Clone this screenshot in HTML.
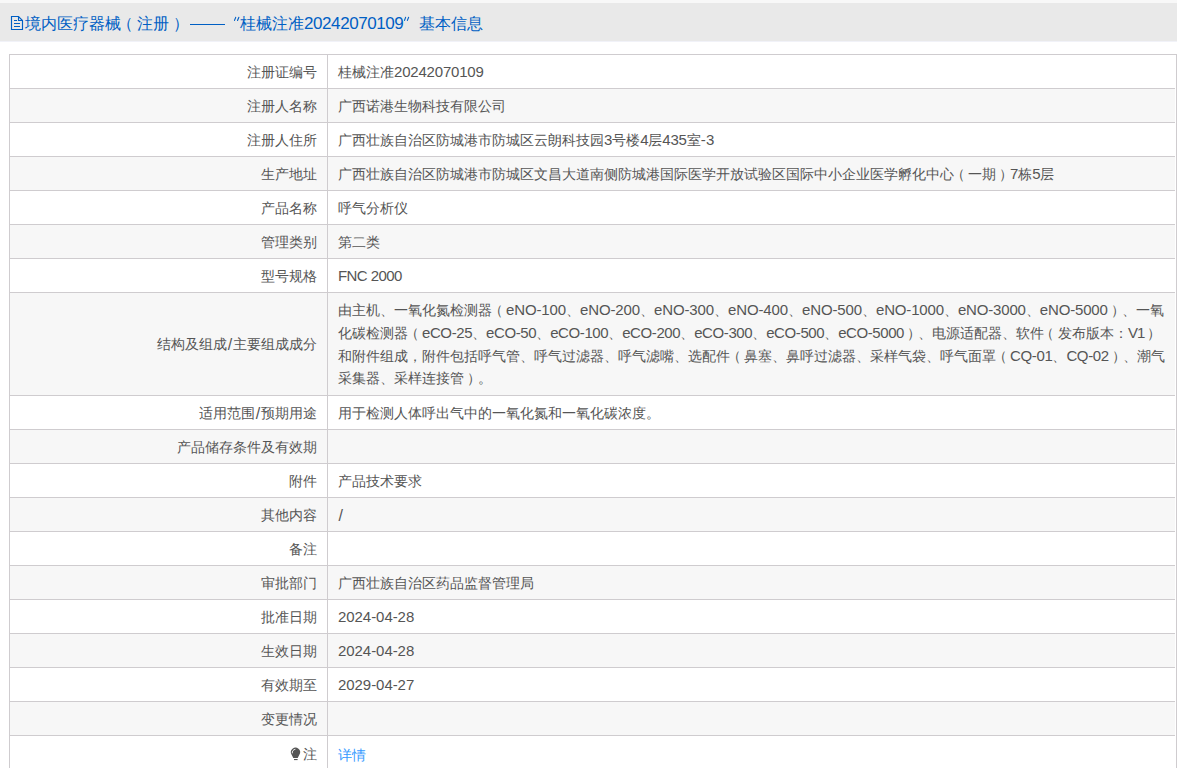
<!DOCTYPE html>
<html><head><meta charset="utf-8">
<style>
html,body{margin:0;padding:0;background:#fff;}
body{width:1177px;height:768px;overflow:hidden;position:relative;font-family:"Liberation Sans",sans-serif;color:#555;}
.top{position:absolute;left:0;top:0;width:1177px;height:3px;background:#f8f8f8;}
.hdr{position:absolute;left:0;top:3px;width:1177px;height:38px;background:#e9e9e9;}
.hline{position:absolute;left:0;top:41px;width:1177px;height:1px;background:#f1f2f8;}
.t{position:absolute;top:4.5px;height:38px;line-height:38px;font-size:16px;color:#005fc4;white-space:nowrap;}
.dash{position:absolute;left:190px;top:24px;width:35px;height:1px;background:#005fc4;}
table{position:absolute;left:9px;top:54px;border-collapse:collapse;width:1167px;font-size:14px;}
td:last-child{border-right-color:#fff;}
.rb{position:absolute;left:1176px;top:54px;width:1px;height:714px;background:#cfcccf;}
.wb{position:absolute;left:1175px;top:55px;width:1px;height:713px;background:#fff;}
.tb{position:absolute;left:1170px;top:54px;width:7px;height:1px;background:#cfcccf;}
.sl{font-size:16px;line-height:0;margin:0 0.9px;position:relative;top:1px;}
td{border:1px solid #cfcccf;padding:6px 10px 4px 10px;line-height:23px;vertical-align:middle;white-space:nowrap;}
td.l{width:297px;text-align:right;}
tr:nth-child(even) td{background:#f7f7f7;}
.n{font-size:15px;line-height:0;}
tr.tall td{line-height:22.75px;padding-top:6px;padding-bottom:5px;}
.lnk{color:#3399ff;position:relative;top:2px;}
.po{position:relative;left:-3.5px;}
.pc{position:relative;left:3px;}
.pm{position:relative;left:0.5px;}
.tpo{position:relative;left:-4px;}
.tpc{position:relative;left:4px;}
tr.last td.l span.z{position:relative;top:1px;}
</style></head><body>
<div class="top"></div>
<div class="hdr"></div>
<div class="hline"></div>
<svg style="position:absolute;left:0;top:0" width="40" height="40">
<path d="M11.5 16.5H18.5L22.5 20.5V29.5H11.5Z" fill="none" stroke="#005fc4" stroke-width="1.15"/>
<path d="M18.5 16.5V20.5H22.5" fill="none" stroke="#005fc4" stroke-width="1.1"/>
<path d="M14 20.5H17M14 23.5H20M14 26.5H20" stroke="#005fc4" stroke-width="1.1"/>
</svg>
<svg style="position:absolute;left:0;top:0" width="420" height="30"><path d="M235.7 17.4L234.5 20.4M238.8 17.4L237.5 20.4M405.6 17.4L404.5 20.4M408.6 17.4L407.4 20.4" stroke="#005fc4" stroke-width="1.15" stroke-linecap="round"/></svg>
<div class="t" style="left:25px">境内医疗器械<span class="tpo">（</span>注册<span class="tpc">）</span></div>
<div class="dash"></div>
<div class="t" style="left:239.5px">桂械注准</div>
<div class="t" style="left:304px;letter-spacing:-0.42px;font-size:17px">20242070109</div>
<div class="t" style="left:418.5px">基本信息</div>
<table>
<tr><td class="l">注册证编号</td><td>桂械注准<span class="n" style="letter-spacing:-0.192px">20242070109</span></td></tr>
<tr><td class="l">注册人名称</td><td>广西诺港生物科技有限公司</td></tr>
<tr><td class="l">注册人住所</td><td>广西壮族自治区防城港市防城区云朗科技园<span class="n" style="letter-spacing:-0.194px">3</span>号楼<span class="n" style="letter-spacing:-0.194px">4</span>层<span class="n" style="letter-spacing:-0.194px">435</span>室<span class="n" style="letter-spacing:0.153px">-3</span></td></tr>
<tr><td class="l">生产地址</td><td>广西壮族自治区防城港市防城区文昌大道南侧防城港国际医学开放试验区国际中小企业医学孵化中心<span class="po">（</span>一期<span class="pc">）</span><span class="n" style="letter-spacing:-0.194px">7</span>栋<span class="n" style="letter-spacing:-0.194px">5</span>层</td></tr>
<tr><td class="l">产品名称</td><td>呼气分析仪</td></tr>
<tr><td class="l">管理类别</td><td>第二类</td></tr>
<tr><td class="l">型号规格</td><td><span class="n" style="letter-spacing:-0.566px">FNC 2000</span></td></tr>
<tr class="tall"><td class="l">结构及组成<span class="sl">/</span>主要组成成分</td><td>由主机、一氧化氮检测器<span class="po">（</span><span class="n" style="letter-spacing:-0.125px">eNO-100</span>、<span class="n" style="letter-spacing:-0.125px">eNO-200</span>、<span class="n" style="letter-spacing:-0.125px">eNO-300</span>、<span class="n" style="letter-spacing:-0.125px">eNO-400</span>、<span class="n" style="letter-spacing:-0.125px">eNO-500</span>、<span class="n" style="letter-spacing:-0.165px">eNO-1000</span>、<span class="n" style="letter-spacing:-0.165px">eNO-3000</span>、<span class="n" style="letter-spacing:-0.165px">eNO-5000</span><span class="pc">）</span>、一氧<br>化碳检测器<span class="po">（</span><span class="n" style="letter-spacing:-0.405px">eCO-25</span>、<span class="n" style="letter-spacing:-0.405px">eCO-50</span>、<span class="n" style="letter-spacing:-0.411px">eCO-100</span>、<span class="n" style="letter-spacing:-0.411px">eCO-200</span>、<span class="n" style="letter-spacing:-0.411px">eCO-300</span>、<span class="n" style="letter-spacing:-0.411px">eCO-500</span>、<span class="n" style="letter-spacing:-0.427px">eCO-5000</span><span class="pc">）</span>、电源适配器、软件<span class="po">（</span>发布版本<span class="pm">：</span><span class="n" style="letter-spacing:-1.030px">V1</span><span class="pc">）</span><br>和附件组成，附件包括呼气管、呼气过滤器、呼气滤嘴、选配件<span class="po">（</span>鼻塞、鼻呼过滤器、采样气袋、呼气面罩<span class="po">（</span><span class="n" style="letter-spacing:-0.358px">CQ-01</span>、<span class="n" style="letter-spacing:-0.358px">CQ-02</span><span class="pc">）</span>、潮气<br>采集器、采样连接管<span class="pc">）</span>。</td></tr>
<tr><td class="l">适用范围<span class="sl">/</span>预期用途</td><td>用于检测人体呼出气中的一氧化氮和一氧化碳浓度。</td></tr>
<tr><td class="l">产品储存条件及有效期</td><td></td></tr>
<tr><td class="l">附件</td><td>产品技术要求</td></tr>
<tr><td class="l">其他内容</td><td><span class="sl" style="margin:0 0 0 0.5px">/</span></td></tr>
<tr><td class="l">备注</td><td></td></tr>
<tr><td class="l">审批部门</td><td>广西壮族自治区药品监督管理局</td></tr>
<tr><td class="l">批准日期</td><td><span class="n" style="letter-spacing:-0.053px">2024-04-28</span></td></tr>
<tr><td class="l">生效日期</td><td><span class="n" style="letter-spacing:-0.053px">2024-04-28</span></td></tr>
<tr><td class="l">有效期至</td><td><span class="n" style="letter-spacing:-0.053px">2029-04-27</span></td></tr>
<tr><td class="l">变更情况</td><td></td></tr>
<tr class="last"><td class="l"><span class="z">注</span></td><td><span class="lnk">详情</span></td></tr>
</table>
<svg style="position:absolute;left:0;top:0" width="1177" height="768"><path d="M291.52 754.5A4.6 4.6 0 1 1 299.48 754.5L297.7 757.9H293.3Z" fill="#555"/><path d="M292.3 753.3A3.4 3.4 0 0 1 295.4 749.3" fill="none" stroke="#fff" stroke-width="0.9"/><rect x="294" y="759" width="3.6" height="1.1" fill="#555"/></svg>
<div class="wb"></div><div class="rb"></div><div class="tb"></div>
</body></html>
